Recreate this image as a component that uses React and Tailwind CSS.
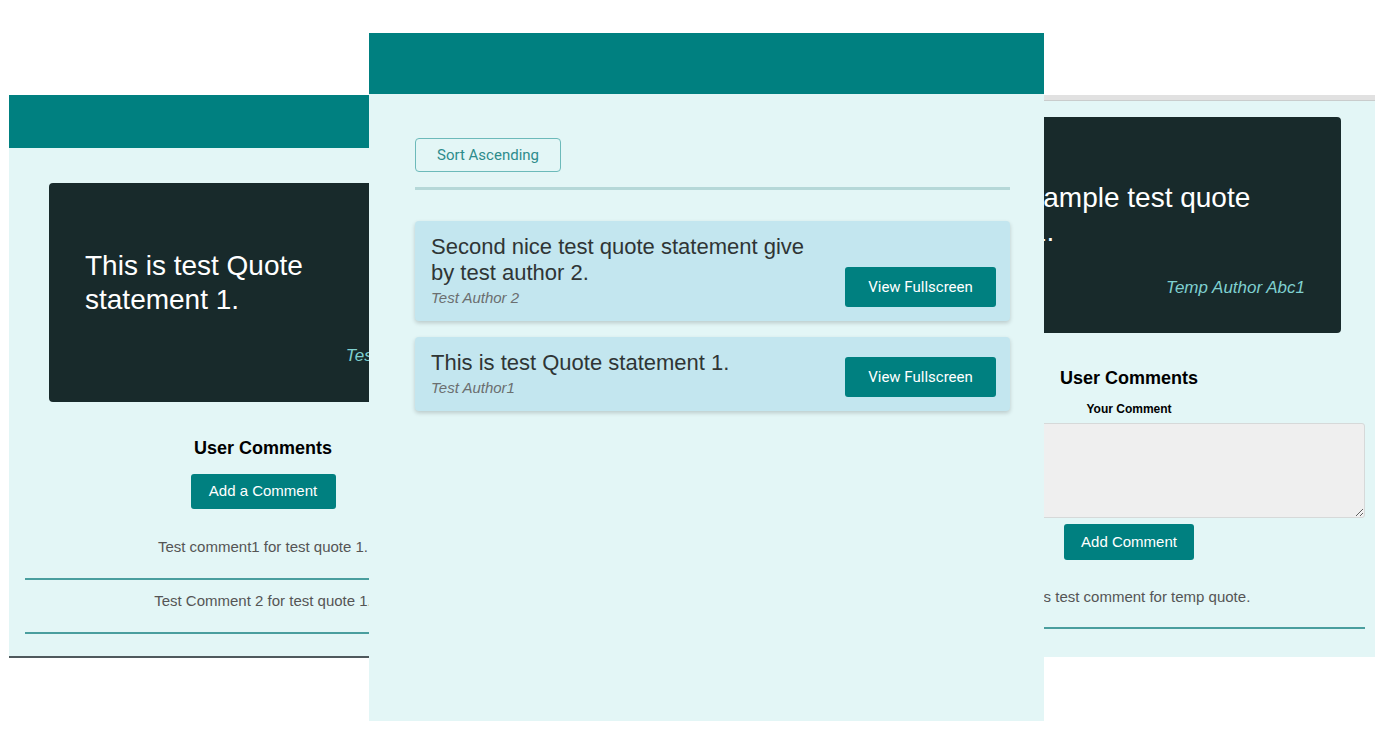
import React from 'react'

// Quote card (dark), used by the two side screens
const QuoteCard = ({ text, author, className }) => (
  <div className={`bg-[#182a2b] rounded-[4px] pt-[64px] pb-[34px] px-[36px] ${className}`}>
    <p className="max-w-[300px] text-[28px] leading-[34px] text-white">{text}</p>
    <p className="mt-[28px] text-[17px] leading-[22px] italic text-[#7fd0d0] text-right">{author}</p>
  </div>
)

const ListItem = ({ quote, author }) => (
  <div className="flex items-end justify-between bg-[#c3e6ef] rounded-[4px] shadow-[0_2px_4px_rgba(0,0,0,0.18)] pl-[16px] pr-[14px] pt-[13px] pb-[14px]">
    <div className="max-w-[388px]">
      <p className="text-[22px] leading-[26px] text-[#2f3535]">{quote}</p>
      <p className="mt-[3px] text-[15px] leading-[18px] italic text-[#6b6f70]">{author}</p>
    </div>
    <button className="w-[151px] h-[40px] bg-[#008080] rounded-[3px] text-white text-[15px] font-['Roboto',sans-serif]">
      View Fullscreen
    </button>
  </div>
)

export default function App() {
  return (
    <div className="relative w-[1390px] h-[744px] bg-white overflow-hidden font-['Liberation_Sans',Arial,sans-serif]">
      {/* left screen */}
      <div className="absolute left-[9px] top-[95px] w-[508px] h-[563px] bg-[#e3f6f6] border-b-2 border-[#4f595d] flex flex-col">
        <div className="h-[53px] bg-[#008080]" />
        <QuoteCard className="mx-[40px] mt-[35px] pt-[66px] pb-[35px]" text="This is test Quote statement 1." author="Test Author1" />
        <h3 className="mt-[35px] text-center text-[18px] leading-[22px] font-bold text-black">User Comments</h3>
        <button className="self-center mt-[15px] w-[145px] h-[35px] bg-[#008080] rounded-[3px] text-white text-[15px]">Add a Comment</button>
        <div className="mx-[16px] mt-[17px]">
          <p className="pt-[12px] pb-[22px] text-center text-[15px] leading-[18px] text-[#555] border-b-2 border-[#4a9e9e]">Test comment1 for test quote 1.</p>
          <p className="pt-[12px] pb-[22px] text-center text-[15px] leading-[18px] text-[#555] border-b-2 border-[#4a9e9e]">Test Comment 2 for test quote 1.</p>
        </div>
      </div>

      {/* right screen */}
      <div className="absolute left-[883px] top-[95px] w-[492px] h-[562px] bg-[#e3f6f6] flex flex-col">
        <div className="h-[6px] bg-[#e1e1e1] border-b border-[#c9cccc]" />
        <QuoteCard className="mx-[34px] mt-[16px]" text="Temp sample test quote quote 1." author="Temp Author Abc1" />
        <h3 className="mt-[34px] text-center text-[18px] leading-[22px] font-bold text-black">User Comments</h3>
        <label className="mt-[13px] text-center text-[12px] leading-[15px] font-bold text-black">Your Comment</label>
        <textarea className="mx-[10px] mt-[6px] h-[95px] bg-[#efefef] border border-[#d6d9d9] rounded-[3px] resize-y" />
        <button className="self-center mt-[6px] w-[130px] h-[36px] bg-[#008080] rounded-[3px] text-white text-[15px]">Add Comment</button>
        <p className="mx-[10px] mt-[28px] pb-[21px] text-center text-[15px] leading-[18px] text-[#555] border-b-2 border-[#4a9e9e]">This is test comment for temp quote.</p>
      </div>

      {/* middle screen */}
      <div className="absolute left-[369px] top-[33px] w-[675px] h-[688px] bg-[#e3f6f6] flex flex-col">
        <div className="h-[61px] bg-[#008080]" />
        <div className="pl-[46px] pr-[34px] pt-[44px] flex flex-col">
          <button className="self-start w-[146px] h-[34px] border border-[#6cbaba] rounded-[4px] text-[#2e8c8c] text-[15px] font-['Roboto',sans-serif]">Sort Ascending</button>
          <div className="mt-[15px] h-[3px] bg-[#b5d8d8]" />
          <div className="mt-[31px] flex flex-col gap-[16px]">
            <ListItem quote="Second nice test quote statement give by test author 2." author="Test Author 2" />
            <ListItem quote="This is test Quote statement 1." author="Test Author1" />
          </div>
        </div>
      </div>
    </div>
  )
}
